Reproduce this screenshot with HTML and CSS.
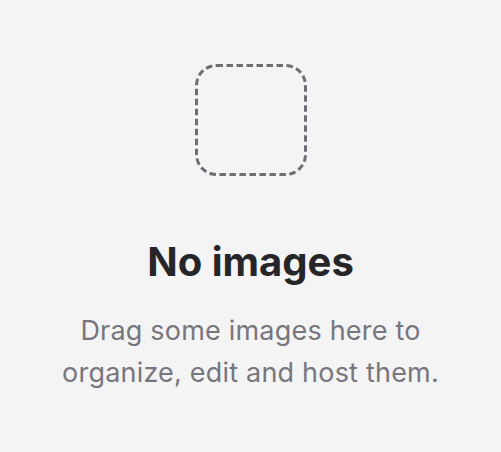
FILE: index.html
```
<!DOCTYPE html>
<html>
<head>
<meta charset="utf-8">
<link rel="stylesheet" href="styles.css">
</head>
<body>
<main class="empty">
  <svg class="drop" width="112" height="112" viewBox="0 0 112 112" aria-hidden="true">
    <rect x="1.5" y="1.5" width="109" height="109" rx="20" ry="20" fill="none" stroke="#6e6e76" stroke-width="3" stroke-dasharray="6.5 3.5"/>
  </svg>
  <h1 class="title">No images</h1>
  <p class="text">Drag some images here to organize, edit and host them.</p>
</main>
</body>
</html>
```
FILE: styles.css
```
html, body {
  margin: 0;
  padding: 0;
  background: #f4f4f4;
  width: 501px;
  height: 452px;
  overflow: hidden;
}
.empty {
  display: flex;
  flex-direction: column;
  align-items: center;
  font-family: Inter, "Noto Sans", sans-serif;
  padding-top: 64px;
}
.drop {
  display: block;
  width: 112px;
  height: 112px;
}
.title {
  margin: 62px 0 0;
  font-size: 40px;
  line-height: 48px;
  font-weight: 700;
  color: #262628;
  letter-spacing: 0;
}
.text {
  margin: 24px 0 0;
  width: 440px;
  text-align: center;
  font-size: 27px;
  line-height: 42px;
  letter-spacing: 0.2px;
  color: #77767e;
}
```
